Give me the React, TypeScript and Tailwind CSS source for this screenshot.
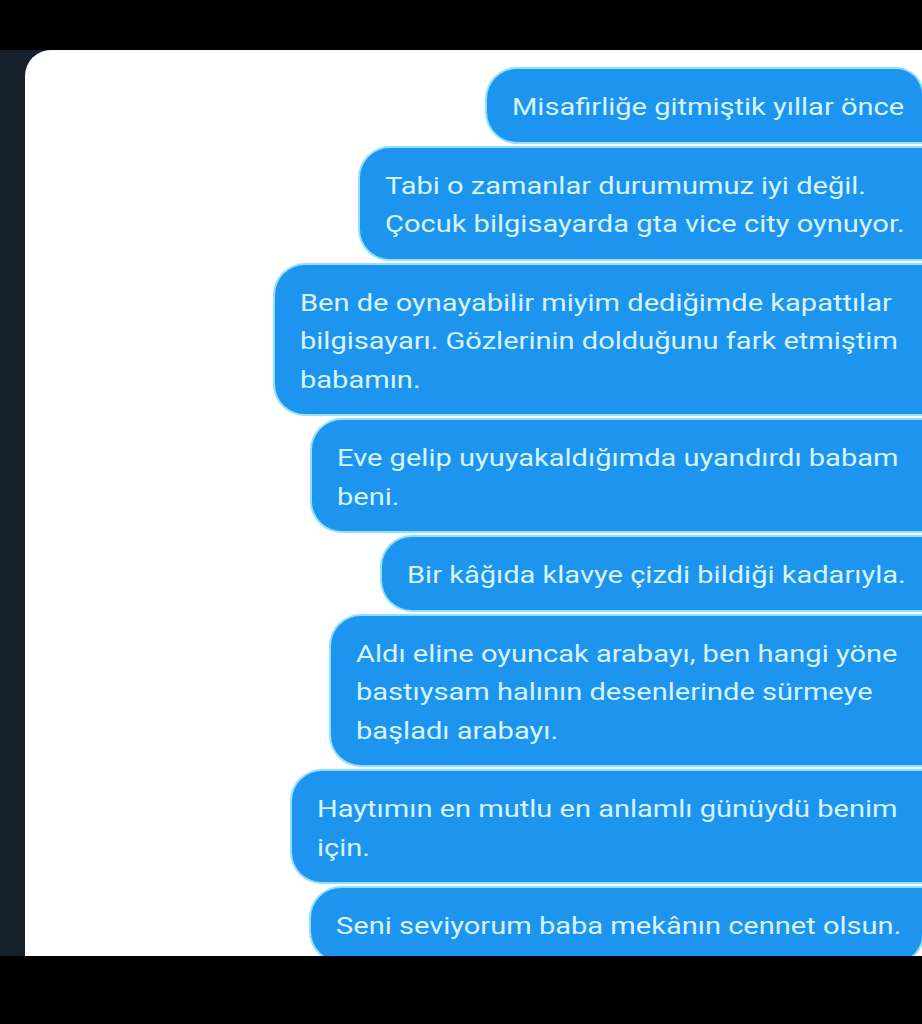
import React from "react";

type Msg = { w: string; lines: string[]; extra?: string };

const msgs: Msg[] = [
  { w: "w-[435px]", lines: ["Misafirliğe gitmiştik yıllar önce"], extra: "rounded-tr-[26px]" },
  { w: "w-[562px]", lines: ["Tabi o zamanlar durumumuz iyi değil.", "Çocuk bilgisayarda gta vice city oynuyor."] },
  {
    w: "w-[647px]",
    lines: [
      "Ben de oynayabilir miyim dediğimde kapattılar",
      "bilgisayarı. Gözlerinin dolduğunu fark etmiştim",
      "babamın.",
    ],
  },
  { w: "w-[610px]", lines: ["Eve gelip uyuyakaldığımda uyandırdı babam", "beni."] },
  { w: "w-[540px]", lines: ["Bir kâğıda klavye çizdi bildiği kadarıyla."] },
  {
    w: "w-[591px]",
    lines: [
      "Aldı eline oyuncak arabayı, ben hangi yöne",
      "bastıysam halının desenlerinde sürmeye",
      "başladı arabayı.",
    ],
  },
  { w: "w-[630px]", lines: ["Haytımın en mutlu en anlamlı günüydü benim", "için."] },
  { w: "w-[611px]", lines: ["Seni seviyorum baba mekânın cennet olsun."], extra: "rounded-br-[26px]" },
];

export default function App() {
  return (
    <div
      className="w-[922px] h-[1024px] bg-black flex flex-col overflow-hidden"
      style={{ fontFamily: "Roboto, 'Noto Sans', sans-serif" }}
    >
      <div className="h-[50px] shrink-0 bg-black" />
      <div className="h-[906px] shrink-0 flex bg-[#15202b]">
        <div className="w-[25px] shrink-0" />
        <div className="flex-1 bg-white rounded-tl-[26px] overflow-hidden flex flex-col items-end pt-[19px] gap-[6px]">
          {msgs.map((m, i) => (
            <div
              key={i}
              className={`${m.w} shrink-0 bg-[#1d95ee] rounded-l-[30px] ${m.extra ?? ""} shadow-[0_0_0_2px_#8fe1ff] pl-[25px] pt-[19px] pb-[15px] text-[24px] leading-[38.5px] text-[#d6f4ff] whitespace-nowrap`}
            >
              {m.lines.map((l, j) => (
                <div key={j} className="origin-left scale-x-[1.21]">
                  {l}
                </div>
              ))}
            </div>
          ))}
        </div>
      </div>
      <div className="flex-1 bg-black" />
    </div>
  );
}
